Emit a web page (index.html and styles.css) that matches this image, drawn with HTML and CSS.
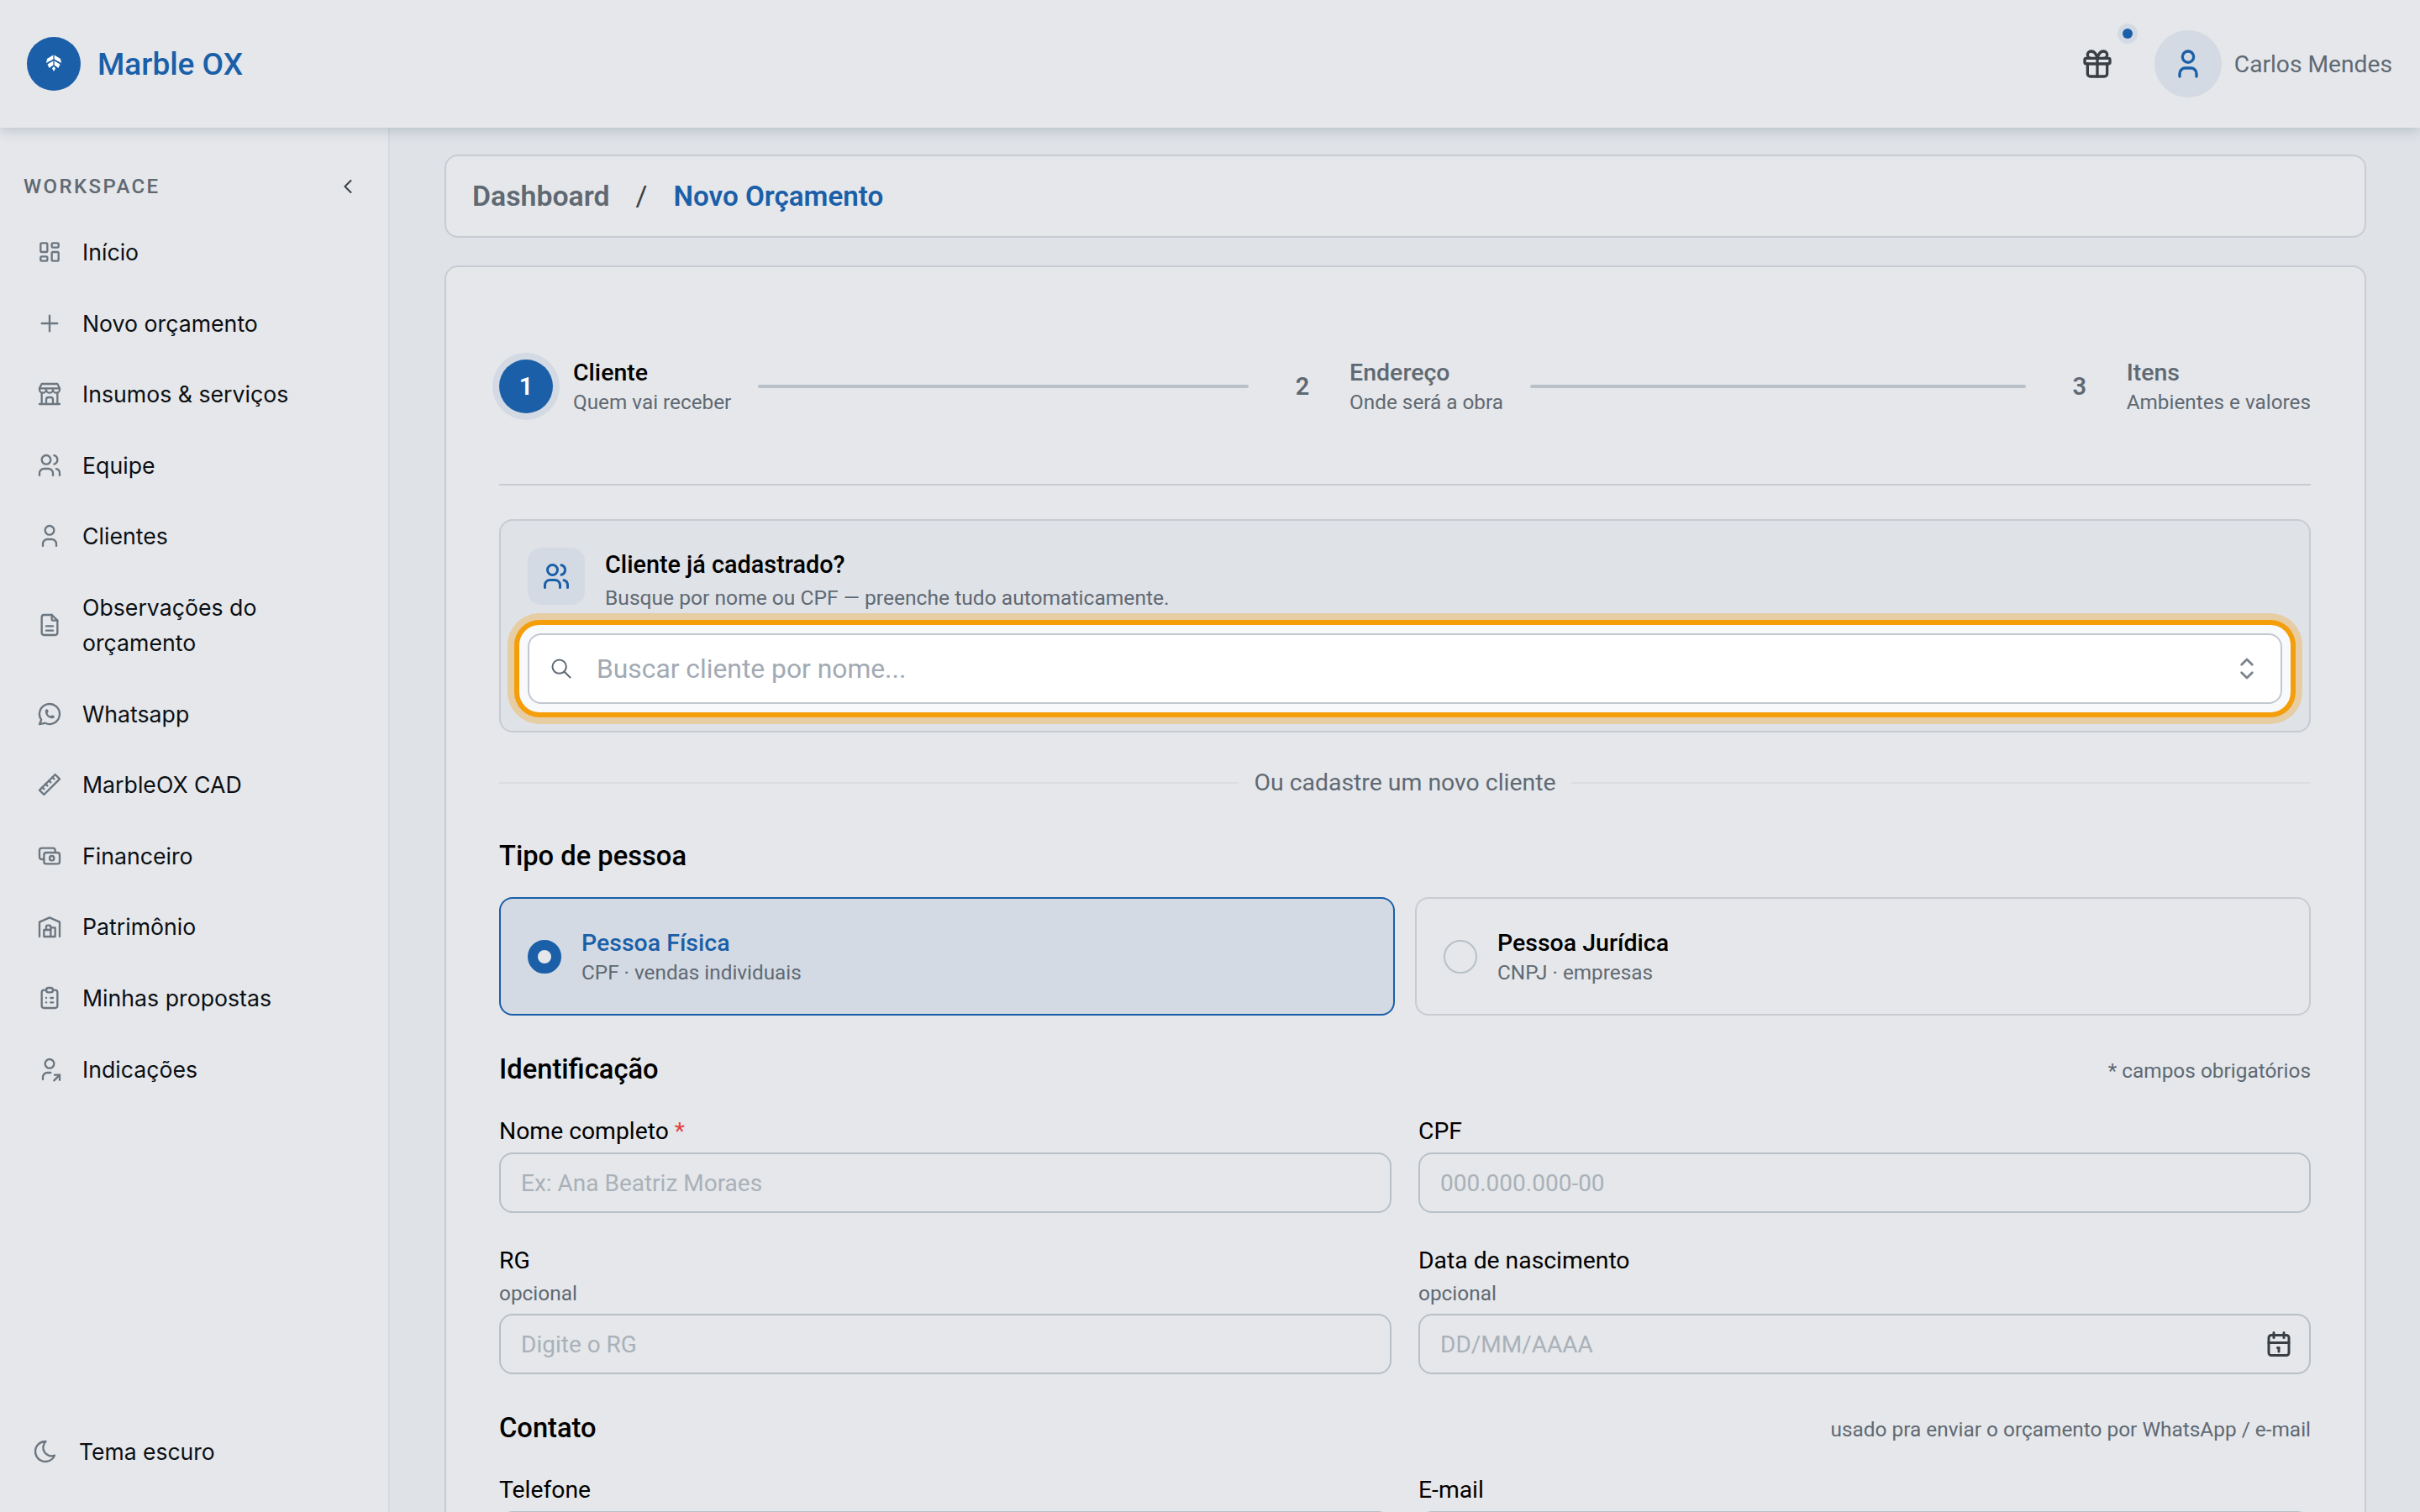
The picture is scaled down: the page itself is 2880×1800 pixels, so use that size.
FILE: index.html
```html
<!DOCTYPE html>
<html lang="pt-BR">
<head>
  <meta charset="UTF-8">
  <meta name="viewport" content="width=device-width, initial-scale=1.0">
  <title>Marble OX - Novo Orçamento</title>
  <link rel="stylesheet" href="styles.css">
</head>
<body>

  <header class="topbar">
    <div class="brand">
      <span class="brand-logo">
        <svg viewBox="0 0 24 24" width="24" height="24" fill="#fff"><path d="M11.400 1.500l-7.400 4.500-1 5 8.400-4.500z"/><path d="M12.600 1.500l7.400 4.500 1 5-8.400-4.500z"/><path d="M4.500 12.500l6.900-4v5l-4.900 3.500z"/><path d="M19.500 12.500l-6.900-4v5l4.900 3.500z"/><path d="M12 15l2 2.500-2 3.500-2-3.500z"/></svg>
      </span>
      <span class="brand-name">Marble OX</span>
    </div>
    <div class="top-actions">
      <button class="gift-btn">
        <svg class="ico gift-ico" viewBox="0 0 24 24"><path d="M3 9a1 1 0 0 1 1 -1h16a1 1 0 0 1 1 1v2a1 1 0 0 1 -1 1h-16a1 1 0 0 1 -1 -1z"/><path d="M12 8v13"/><path d="M19 12v7a2 2 0 0 1 -2 2h-10a2 2 0 0 1 -2 -2v-7"/><path d="M7.500 8a2.500 2.500 0 0 1 0 -5a4.800 8 0 0 1 4.500 5a4.800 8 0 0 1 4.500 -5a2.500 2.500 0 0 1 0 5"/></svg>
        <span class="gift-dot"></span>
      </button>
      <span class="avatar">
        <svg class="ico avatar-ico" viewBox="0 0 24 24"><path d="M8 7a4 4 0 1 0 8 0a4 4 0 0 0 -8 0"/><path d="M6 21v-2a4 4 0 0 1 4 -4h4a4 4 0 0 1 4 4v2"/></svg>
      </span>
      <span class="user-name">Carlos Mendes</span>
    </div>
  </header>

  <div class="layout">
    <aside class="sidebar">
      <div class="side-head">
        <span class="side-title">WORKSPACE</span>
        <svg class="ico side-toggle" viewBox="0 0 24 24"><path d="M15 6l-6 6l6 6"/></svg>
      </div>
      <nav class="side-nav">
        <a class="nav-item"><svg class="ico" viewBox="0 0 24 24"><path d="M5 4h4a1 1 0 0 1 1 1v6a1 1 0 0 1 -1 1h-4a1 1 0 0 1 -1 -1v-6a1 1 0 0 1 1 -1"/><path d="M5 16h4a1 1 0 0 1 1 1v2a1 1 0 0 1 -1 1h-4a1 1 0 0 1 -1 -1v-2a1 1 0 0 1 1 -1"/><path d="M15 12h4a1 1 0 0 1 1 1v6a1 1 0 0 1 -1 1h-4a1 1 0 0 1 -1 -1v-6a1 1 0 0 1 1 -1"/><path d="M15 4h4a1 1 0 0 1 1 1v2a1 1 0 0 1 -1 1h-4a1 1 0 0 1 -1 -1v-2a1 1 0 0 1 1 -1"/></svg><span>Início</span></a>
        <a class="nav-item"><svg class="ico" viewBox="0 0 24 24"><path d="M12 5v14"/><path d="M5 12h14"/></svg><span>Novo orçamento</span></a>
        <a class="nav-item"><svg class="ico" viewBox="0 0 24 24"><path d="M3 21h18"/><path d="M3 7v1a3 3 0 0 0 6 0v-1m0 1a3 3 0 0 0 6 0v-1m0 1a3 3 0 0 0 6 0v-1h-18l2 -4h14l2 4"/><path d="M5 21v-10.150"/><path d="M19 21v-10.150"/><path d="M9 21v-4a2 2 0 0 1 2 -2h2a2 2 0 0 1 2 2v4"/></svg><span>Insumos &amp; serviços</span></a>
        <a class="nav-item"><svg class="ico" viewBox="0 0 24 24"><path d="M5 7a4 4 0 1 0 8 0a4 4 0 0 0 -8 0"/><path d="M3 21v-2a4 4 0 0 1 4 -4h4a4 4 0 0 1 4 4v2"/><path d="M16 3.130a4 4 0 0 1 0 7.750"/><path d="M21 21v-2a4 4 0 0 0 -3 -3.850"/></svg><span>Equipe</span></a>
        <a class="nav-item"><svg class="ico" viewBox="0 0 24 24"><path d="M8 7a4 4 0 1 0 8 0a4 4 0 0 0 -8 0"/><path d="M6 21v-2a4 4 0 0 1 4 -4h4a4 4 0 0 1 4 4v2"/></svg><span>Clientes</span></a>
        <a class="nav-item"><svg class="ico" viewBox="0 0 24 24"><path d="M14 3v4a1 1 0 0 0 1 1h4"/><path d="M17 21h-10a2 2 0 0 1 -2 -2v-14a2 2 0 0 1 2 -2h7l5 5v11a2 2 0 0 1 -2 2z"/><path d="M9 17h6"/><path d="M9 13h6"/></svg><span>Observações do orçamento</span></a>
        <a class="nav-item"><svg class="ico" viewBox="0 0 24 24"><path d="M3 21l1.650 -3.800a9 9 0 1 1 3.400 2.900l-5.050 .9"/><path d="M9 10a.5 .5 0 0 0 1 0v-1a.5 .5 0 0 0 -1 0v1a5 5 0 0 0 5 5h1a.5 .5 0 0 0 0 -1h-1a.5 .5 0 0 0 0 1"/></svg><span>Whatsapp</span></a>
        <a class="nav-item"><svg class="ico" viewBox="0 0 24 24"><path d="M17 3l4 4l-14 14l-4 -4z"/><path d="M16 7l-1.500 -1.500"/><path d="M13 10l-1.500 -1.500"/><path d="M10 13l-1.500 -1.500"/><path d="M7 16l-1.500 -1.500"/></svg><span>MarbleOX CAD</span></a>
        <a class="nav-item"><svg class="ico" viewBox="0 0 24 24"><path d="M7 11a2 2 0 0 1 2 -2h10a2 2 0 0 1 2 2v6a2 2 0 0 1 -2 2h-10a2 2 0 0 1 -2 -2z"/><path d="M12 14a2 2 0 1 0 4 0a2 2 0 1 0 -4 0"/><path d="M17 9v-2a2 2 0 0 0 -2 -2h-10a2 2 0 0 0 -2 2v6a2 2 0 0 0 2 2h2"/></svg><span>Financeiro</span></a>
        <a class="nav-item"><svg class="ico" viewBox="0 0 24 24"><path d="M3 21v-13l9 -4l9 4v13"/><path d="M13 13h4v8h-10v-6h6"/><path d="M13 21v-9a1 1 0 0 0 -1 -1h-2a1 1 0 0 0 -1 1v3"/></svg><span>Patrimônio</span></a>
        <a class="nav-item"><svg class="ico" viewBox="0 0 24 24"><path d="M9 5h-2a2 2 0 0 0 -2 2v12a2 2 0 0 0 2 2h10a2 2 0 0 0 2 -2v-12a2 2 0 0 0 -2 -2h-2"/><path d="M9 5a2 2 0 0 1 2 -2h2a2 2 0 0 1 2 2a2 2 0 0 1 -2 2h-2a2 2 0 0 1 -2 -2z"/><path d="M9 12h.010"/><path d="M13 12h2"/><path d="M9 16h.010"/><path d="M13 16h2"/></svg><span>Minhas propostas</span></a>
        <a class="nav-item"><svg class="ico" viewBox="0 0 24 24"><path d="M8 7a4 4 0 1 0 8 0a4 4 0 0 0 -8 0"/><path d="M6 21v-2a4 4 0 0 1 4 -4h3"/><path d="M16 22l5 -5"/><path d="M21 21.500v-4.500h-4.500"/></svg><span>Indicações</span></a>
      </nav>
      <a class="theme-toggle"><svg class="ico" viewBox="0 0 24 24"><path d="M12 3h.393a7.500 7.500 0 0 0 7.920 12.446a9 9 0 1 1 -8.313 -12.454z"/></svg><span>Tema escuro</span></a>
    </aside>

    <main class="content">
      <div class="breadcrumb">
        <span class="crumb">Dashboard</span>
        <span class="crumb-sep">/</span>
        <span class="crumb-current">Novo Orçamento</span>
      </div>

      <section class="card">
        <div class="stepper">
          <div class="step active">
            <span class="step-num">1</span>
            <div><div class="step-title">Cliente</div><div class="step-sub">Quem vai receber</div></div>
          </div>
          <span class="step-line step-line-first"></span>
          <div class="step">
            <span class="step-num">2</span>
            <div><div class="step-title">Endereço</div><div class="step-sub">Onde será a obra</div></div>
          </div>
          <span class="step-line"></span>
          <div class="step">
            <span class="step-num">3</span>
            <div><div class="step-title">Itens</div><div class="step-sub">Ambientes e valores</div></div>
          </div>
        </div>

        <div class="lookup">
          <div class="lookup-head">
            <span class="lookup-icon">
              <svg class="ico" viewBox="0 0 24 24"><path d="M5 7a4 4 0 1 0 8 0a4 4 0 0 0 -8 0"/><path d="M3 21v-2a4 4 0 0 1 4 -4h4a4 4 0 0 1 4 4v2"/><path d="M16 3.130a4 4 0 0 1 0 7.750"/><path d="M21 21v-2a4 4 0 0 0 -3 -3.850"/></svg>
            </span>
            <div>
              <div class="lookup-title">Cliente já cadastrado?</div>
              <div class="lookup-sub">Busque por nome ou CPF — preenche tudo automaticamente.</div>
            </div>
          </div>
          <div class="lookup-focus">
            <div class="lookup-field">
              <svg class="ico search-ico" viewBox="0 0 24 24"><path d="M3 10a7 7 0 1 0 14 0a7 7 0 1 0 -14 0"/><path d="M21 21l-6 -6"/></svg>
              <input class="lookup-input" type="text" placeholder="Buscar cliente por nome...">
              <svg class="ico selector-ico" viewBox="0 0 24 24"><path d="M8 9l4 -4l4 4"/><path d="M16 15l-4 4l-4 -4"/></svg>
            </div>
          </div>
        </div>

        <div class="or-divider"><span>Ou cadastre um novo cliente</span></div>

        <h3 class="section-title type-title">Tipo de pessoa</h3>
        <div class="type-grid">
          <div class="type-card selected">
            <span class="radio"></span>
            <div><div class="type-name">Pessoa Física</div><div class="type-sub">CPF · vendas individuais</div></div>
          </div>
          <div class="type-card">
            <span class="radio"></span>
            <div><div class="type-name">Pessoa Jurídica</div><div class="type-sub">CNPJ · empresas</div></div>
          </div>
        </div>

        <div class="section-head">
          <h3 class="section-title">Identificação</h3>
          <span class="section-note">* campos obrigatórios</span>
        </div>
        <div class="form-grid">
          <div class="field">
            <label class="field-label">Nome completo <span class="req">*</span></label>
            <input class="field-input" type="text" placeholder="Ex: Ana Beatriz Moraes">
          </div>
          <div class="field">
            <label class="field-label">CPF</label>
            <input class="field-input" type="text" placeholder="000.000.000-00">
          </div>
          <div class="field">
            <label class="field-label">RG</label>
            <div class="field-hint">opcional</div>
            <input class="field-input" type="text" placeholder="Digite o RG">
          </div>
          <div class="field">
            <label class="field-label">Data de nascimento</label>
            <div class="field-hint">opcional</div>
            <div class="date-wrap">
              <input class="field-input" type="text" placeholder="DD/MM/AAAA">
              <svg class="ico date-ico" viewBox="0 0 24 24"><path d="M4 7a2 2 0 0 1 2 -2h12a2 2 0 0 1 2 2v12a2 2 0 0 1 -2 2h-12a2 2 0 0 1 -2 -2z"/><path d="M16 3v4"/><path d="M8 3v4"/><path d="M4 11h16"/><path d="M11 15h1"/><path d="M12 15v3"/></svg>
            </div>
          </div>
        </div>

        <div class="section-head">
          <h3 class="section-title">Contato</h3>
          <span class="section-note">usado pra enviar o orçamento por WhatsApp / e-mail</span>
        </div>
        <div class="form-grid">
          <div class="field">
            <label class="field-label">Telefone</label>
            <input class="field-input" type="text">
          </div>
          <div class="field">
            <label class="field-label">E-mail</label>
            <input class="field-input" type="text">
          </div>
        </div>
      </section>
    </main>
  </div>

</body>
</html>
```

FILE: styles.css
```css
* {
  box-sizing: border-box;
}
html, body {
  margin: 0;
  height: 1800px;
  overflow: hidden;
}
body {
  font-family: 'Roboto', sans-serif;
  background-color: #dfe2e7;
  color: #000;
}
h3 {
  margin: 0;
}
.ico {
  width: 32px;
  height: 32px;
  flex: none;
  fill: none;
  stroke: currentColor;
  stroke-width: 1.75;
  stroke-linecap: round;
  stroke-linejoin: round;
}

/* top bar */
.topbar {
  position: relative;
  z-index: 2;
  height: 152px;
  display: flex;
  align-items: center;
  justify-content: space-between;
  padding: 0 33px 0 32px;
  background-color: #e5e7ea;
  box-shadow: 0 4px 14px rgba(60, 80, 110, 0.22);
}
.brand {
  display: flex;
  align-items: center;
  gap: 20px;
}
.brand-logo {
  width: 64px;
  height: 64px;
  border-radius: 50%;
  background-color: #1a5fa8;
  display: flex;
  align-items: center;
  justify-content: center;
}
.brand-name {
  font-size: 37px;
  font-weight: 500;
  color: #1a5fa8;
}
.top-actions {
  display: flex;
  align-items: center;
}
.gift-btn {
  position: relative;
  width: 40px;
  height: 40px;
  padding: 0;
  border: none;
  background: none;
  color: #3a3f45;
  margin-right: 48px;
}
.gift-ico {
  width: 40px;
  height: 40px;
  stroke-width: 2;
  display: block;
}
.gift-dot {
  position: absolute;
  top: -22px;
  right: -22px;
  width: 12px;
  height: 12px;
  border-radius: 50%;
  background-color: #1a5fa8;
  box-shadow: 0 0 0 6px #d3dae3;
}
.avatar {
  width: 80px;
  height: 80px;
  border-radius: 50%;
  background-color: #d3dae3;
  color: #1a5fa8;
  display: flex;
  align-items: center;
  justify-content: center;
  margin-right: 15px;
}
.avatar-ico {
  width: 40px;
  height: 40px;
  stroke-width: 2;
}
.user-name {
  font-size: 28.2px;
  color: #5f6973;
}

/* sidebar */
.layout {
  display: flex;
  height: 1648px;
}
.sidebar {
  width: 464px;
  flex: none;
  display: flex;
  flex-direction: column;
  background-color: #e5e7ea;
  border-right: 2px solid #d3dae3;
  padding: 49px 0 0 0;
}
.side-head {
  display: flex;
  align-items: center;
  justify-content: space-between;
  padding: 0 34px 0 28px;
  height: 42px;
  margin-bottom: 18px;
}
.side-title {
  font-size: 24px;
  font-weight: 500;
  letter-spacing: 2.4px;
  color: #5f6973;
}
.side-toggle {
  width: 28px;
  height: 28px;
  color: #3a3f45;
}
.side-nav {
  display: flex;
  flex-direction: column;
  gap: 6.6px;
}
.nav-item {
  display: flex;
  align-items: center;
  gap: 23px;
  padding: 18px 60px 18px 43px;
  font-family: 'Inter', sans-serif;
  font-size: 26.7px;
  line-height: 42px;
  color: #0b0f14;
}
.nav-item .ico {
  color: #6c7680;
}
.theme-toggle {
  display: flex;
  align-items: center;
  gap: 24px;
  margin-top: auto;
  margin-bottom: 51px;
  padding-left: 38px;
  font-family: 'Inter', sans-serif;
  font-size: 26.5px;
  line-height: 42px;
  color: #0b0f14;
}
.theme-toggle .ico {
  color: #6c7680;
}

/* main column */
.content {
  flex: 1;
  min-width: 0;
  padding: 32px 64px 0 65px;
  overflow: hidden;
}
.breadcrumb {
  height: 99px;
  display: flex;
  align-items: center;
  padding: 0 31px;
  background-color: #e5e7ea;
  border: 2px solid #c8ccd2;
  border-radius: 16px;
  font-size: 33.8px;
  font-weight: 600;
}
.crumb {
  color: #5f6973;
}
.crumb-sep {
  margin: 0 31px;
  font-weight: 400;
  color: #3a3f45;
}
.crumb-current {
  font-size: 33.2px;
  color: #1a5fa8;
}
.card {
  margin-top: 33px;
  padding: 111px 64px 0 63px;
  height: 1600px;
  background-color: #e5e7ea;
  border: 2px solid #c8ccd2;
  border-radius: 16px;
}

/* stepper */
.stepper {
  display: flex;
  align-items: center;
  height: 149px;
  padding-bottom: 85px;
  border-bottom: 2px solid #c8ccd2;
}
.step {
  display: flex;
  align-items: center;
  gap: 24px;
}
.step-num {
  width: 64px;
  height: 64px;
  border-radius: 50%;
  display: flex;
  align-items: center;
  justify-content: center;
  font-size: 29px;
  font-weight: 600;
  color: #5f6973;
}
.step.active .step-num {
  background-color: #1a5fa8;
  color: #fff;
  box-shadow: 0 0 0 8px #d3dae3;
}
.step-title {
  font-size: 28.5px;
  font-weight: 500;
  line-height: 38px;
  color: #5f6973;
}
.step.active .step-title {
  color: #000;
}
.step-sub {
  font-size: 24.3px;
  line-height: 32px;
  color: #5f6973;
}
.step-line {
  flex: 1;
  height: 4px;
  margin: 0 32px;
  border-radius: 2px;
  background-color: #b8c0c8;
}
.step-line-first {
  flex-grow: 0.99;
}

/* client lookup */
.lookup {
  margin-top: 40px;
  padding: 32px 32px 22px 32px;
  background-color: #dfe2e7;
  border: 2px solid #c8ccd2;
  border-radius: 16px;
}
.lookup-head {
  display: flex;
  align-items: flex-start;
  gap: 24px;
  height: 68px;
}
.lookup-icon {
  width: 68px;
  height: 68px;
  border-radius: 16px;
  background-color: #d3dae3;
  color: #1a5fa8;
  display: flex;
  align-items: center;
  justify-content: center;
}
.lookup-icon .ico {
  width: 36px;
  height: 36px;
  stroke-width: 2;
}
.lookup-title {
  font-size: 28.8px;
  font-weight: 500;
  line-height: 40px;
}
.lookup-sub {
  font-size: 24.6px;
  line-height: 34px;
  margin-top: 3px;
  color: #5f6973;
}
.lookup-focus {
  margin: 24px -10px 0 -10px;
  padding: 10px;
  background-color: #f7f9fb;
  border-radius: 24px;
  box-shadow: 0 0 0 6px #f59e0b, 0 0 0 14px #e6cda3;
}
.lookup-field {
  height: 84px;
  display: flex;
  align-items: center;
  gap: 28px;
  padding: 0 21px 0 24px;
  background-color: #fff;
  border: 2px solid #c3c8d0;
  border-radius: 16px;
}
.search-ico {
  width: 28px;
  height: 28px;
  color: #5f6973;
}
.lookup-input {
  flex: 1;
  height: 100%;
  border: none;
  outline: none;
  padding: 0;
  font-family: 'Roboto', sans-serif;
  font-size: 31.8px;
  background: none;
}
.lookup-input::placeholder {
  color: #a2aab3;
}
.selector-ico {
  width: 38px;
  height: 38px;
  color: #7a838d;
}

/* divider */
.or-divider {
  display: flex;
  align-items: center;
  gap: 18px;
  margin-top: 39px;
  font-size: 28.4px;
  line-height: 42px;
  color: #5f6973;
}
.or-divider::before, .or-divider::after {
  content: '';
  flex: 1;
  height: 2px;
  background-color: #dadde1;
}

/* person type */
.section-title {
  font-size: 32.7px;
  font-weight: 500;
  line-height: 48px;
}
.type-title {
  margin-top: 42px;
}
.type-grid {
  display: grid;
  grid-template-columns: 1fr 1fr;
  gap: 24px;
  margin-top: 25px;
}
.type-card {
  height: 141px;
  display: flex;
  align-items: center;
  gap: 24px;
  padding: 0 32px;
  border: 2px solid #c8ccd2;
  border-radius: 16px;
}
.type-card.selected {
  background-color: #d3dae3;
  border-color: #1a5fa8;
}
.radio {
  width: 40px;
  height: 40px;
  flex: none;
  border-radius: 50%;
  border: 2px solid #b8c0c8;
}
.selected .radio {
  border: 12px solid #1a5fa8;
  background-color: #e5e7ea;
}
.type-name {
  font-size: 28.5px;
  font-weight: 500;
  line-height: 38px;
}
.selected .type-name {
  color: #1a5fa8;
}
.type-sub {
  font-size: 24.3px;
  line-height: 32px;
  color: #5f6973;
}

/* form */
.section-head {
  display: flex;
  align-items: center;
  justify-content: space-between;
  margin-top: 40px;
}
.section-note {
  font-size: 24.4px;
  margin-top: 3px;
  color: #5f6973;
}
.form-grid {
  display: grid;
  grid-template-columns: 1fr 1fr;
  gap: 36px 32px;
  margin-top: 29px;
}
.field-label {
  display: block;
  font-size: 28.3px;
  line-height: 42px;
  margin-bottom: 4px;
}
.req {
  color: #e53e3e;
}
.field-hint {
  font-size: 24.4px;
  line-height: 36px;
  margin: -4px 0 6px 0;
  color: #5f6973;
}
.field-input {
  display: block;
  width: 100%;
  height: 72px;
  padding: 0 24px;
  border: 2px solid #b8c0c8;
  border-radius: 16px;
  background: none;
  outline: none;
  font-family: 'Roboto', sans-serif;
  font-size: 28px;
}
.field-input::placeholder {
  color: #a9b1b9;
}
.date-wrap {
  position: relative;
}
.date-ico {
  position: absolute;
  top: 18px;
  right: 20px;
  width: 36px;
  height: 36px;
  color: #3a3f45;
  stroke-width: 2;
}
```
